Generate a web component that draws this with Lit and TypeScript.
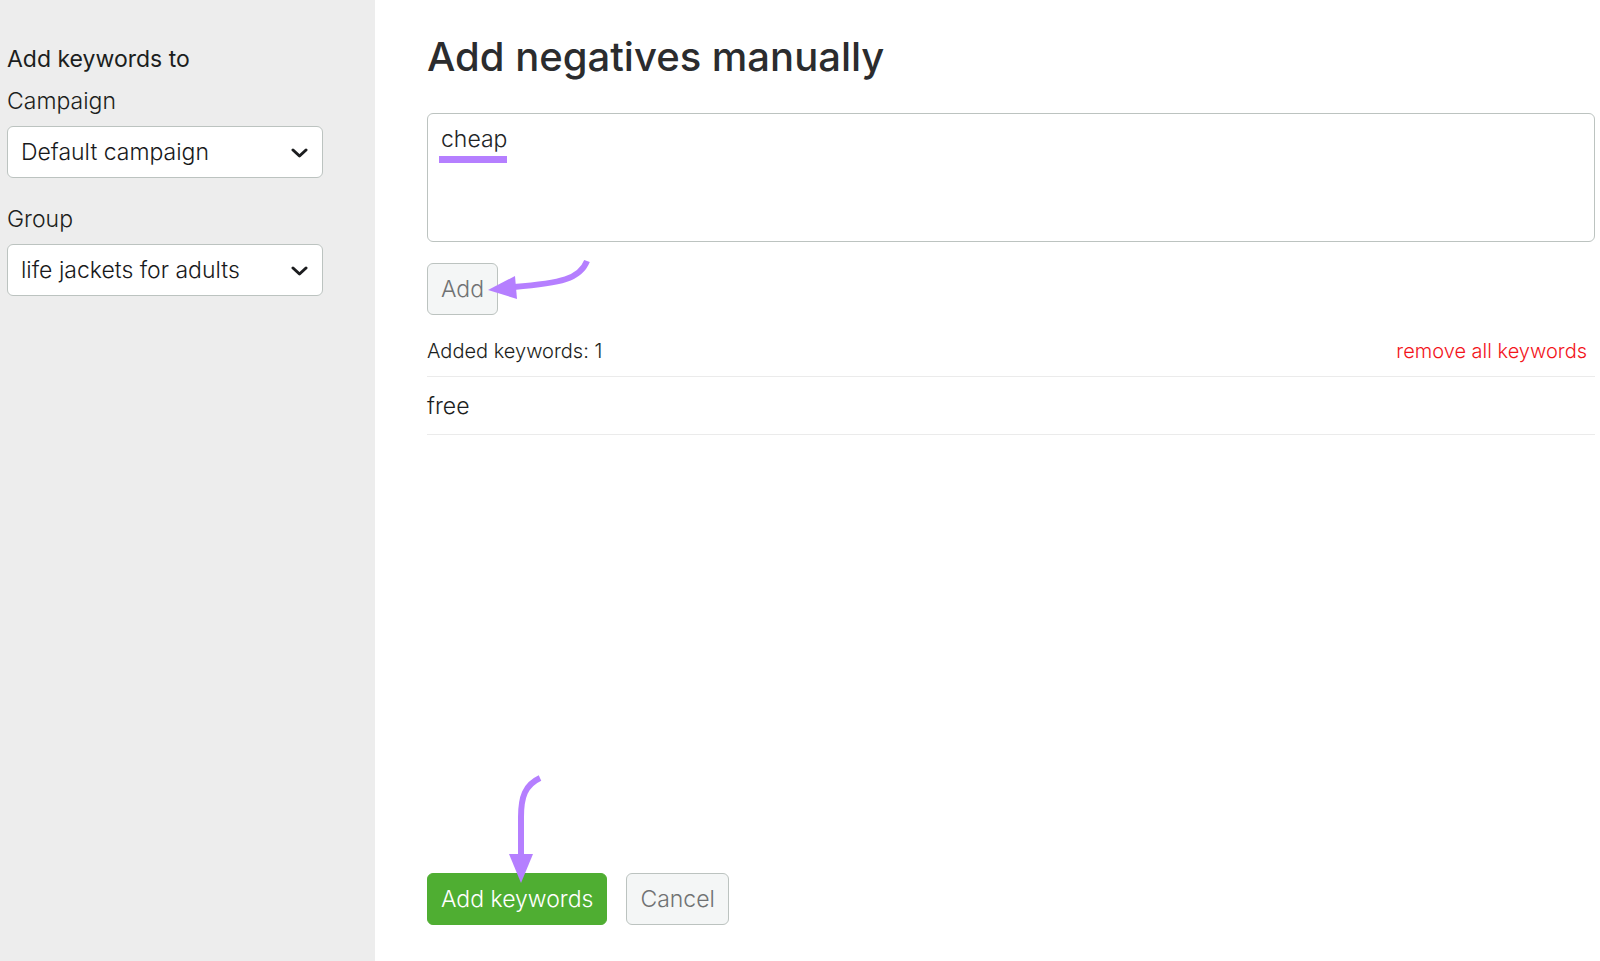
import { LitElement, html, css, svg } from "lit";
import { customElement, property, state } from "lit/decorators.js";

const controlText = css`
  * {
    box-sizing: border-box;
  }
  select,
  textarea,
  button {
    font-family: inherit;
    font-size: 23px;
    font-weight: 300;
    line-height: 30px;
    margin: 0;
  }
`;

@customElement("select-field")
export class SelectField extends LitElement {
  @property() label = "";
  @property({ type: Array }) options: string[] = [];

  static styles = [
    controlText,
    css`
      :host {
        display: block;
      }
      .label {
        display: block;
        margin-bottom: 10px;
      }
      .box {
        display: grid;
        align-items: center;
      }
      .select,
      .chevron {
        grid-area: 1 / 1;
      }
      .select {
        appearance: none;
        width: 100%;
        height: 52px;
        padding: 0 48px 0 13px;
        border: 1px solid #bcc3c0;
        border-radius: 6px;
        background: #fff;
        color: #18191b;
      }
      .chevron {
        justify-self: end;
        margin-right: 15px;
        pointer-events: none;
      }
    `,
  ];

  render() {
    return html`
      <label class="label" for="control">${this.label}</label>
      <div class="box">
        <select class="select" id="control">
          ${this.options.map((option) => html`<option>${option}</option>`)}
        </select>
        <svg class="chevron" width="18" height="12" viewBox="0 0 18 12" aria-hidden="true">
          <path d="M3 4l6.500 6 6.500-6" fill="none" stroke="#1c1d1f" stroke-width="3" stroke-linecap="round" stroke-linejoin="round" />
        </svg>
      </div>
    `;
  }
}

@customElement("app-root")
export class AppRoot extends LitElement {
  @state() private keywords = ["free"];

  static styles = [
    controlText,
    css`
      :host {
        display: grid;
        grid-template-columns: 375px minmax(0, 1fr);
        min-height: 100vh;
        font-family: Inter, "Liberation Sans", sans-serif;
        font-size: 23px;
        font-weight: 300;
        line-height: 30px;
        color: #1c1e20;
        background: #fff;
      }
      .sidebar {
        background: #ededed;
        padding: 44px 52px 36px 7px;
        display: flex;
        flex-direction: column;
      }
      .side-title {
        margin: 0 0 12px;
        font-size: 23px;
        font-weight: 400;
      }
      .group {
        margin-top: 26px;
      }
      .main {
        display: flex;
        flex-direction: column;
        padding: 33px 5px 36px 52px;
      }
      .title {
        margin: 0 0 32px;
        font-size: 40px;
        font-weight: 500;
        line-height: 48px;
        color: #2b2c2e;
      }
      .entry {
        position: relative;
        display: grid;
        margin-bottom: 21px;
      }
      .textarea {
        width: 100%;
        height: 129px;
        padding: 10px 13px;
        border: 1px solid #bcc3c0;
        border-radius: 6px;
        background: #fff;
        color: #222426;
        resize: none;
      }
      .underline {
        position: absolute;
        left: 12px;
        top: 43px;
        width: 68px;
        height: 7px;
        background: #b57fff;
      }
      .anchor {
        position: relative;
        display: flex;
      }
      .arrow {
        position: absolute;
        pointer-events: none;
        overflow: visible;
      }
      .arrow-add {
        left: 61px;
        top: -5px;
      }
      .arrow-submit {
        left: 70px;
        top: -100px;
      }
      .button {
        height: 52px;
        padding: 0 13px;
        border: 1px solid #bcc3c0;
        border-radius: 6px;
        background: #f4f6f6;
        color: #707273;
        white-space: nowrap;
      }
      .primary {
        border-color: #4fae32;
        background: #4fae32;
        color: #fff;
      }
      .summary {
        display: flex;
        justify-content: space-between;
        align-items: center;
        margin-top: 21px;
        padding: 0 8px 10px 0;
        border-bottom: 1px solid #ebebeb;
        font-size: 20px;
      }
      .remove {
        padding: 0;
        border: 0;
        background: none;
        color: #f3141b;
        font-size: 20px;
      }
      .list {
        list-style: none;
        margin: 0;
        padding: 0;
      }
      .item {
        padding: 14px 0 13px;
        border-bottom: 1px solid #ebebeb;
      }
      .footer {
        display: flex;
        gap: 19px;
        margin-top: auto;
      }
    `,
  ];

  private arrowToAdd = svg`
    <path d="M99 3C92 21 73 25 26 29" fill="none" stroke="#b57fff" stroke-width="6" />
    <path d="M0 32 27 18 29 41Z" fill="#b57fff" />
  `;

  private arrowToSubmit = svg`
    <path d="M43 5C28 12 24 24 24 44V84" fill="none" stroke="#b57fff" stroke-width="6" />
    <path d="M12 81H36L24 110Z" fill="#b57fff" />
  `;

  render() {
    return html`
      <aside class="sidebar">
        <h2 class="side-title">Add keywords to</h2>
        <select-field label="Campaign" .options=${["Default campaign"]}></select-field>
        <select-field class="group" label="Group" .options=${["life jackets for adults"]}></select-field>
      </aside>
      <main class="main">
        <h1 class="title">Add negatives manually</h1>
        <div class="entry">
          <textarea class="textarea" aria-label="Negative keywords" spellcheck="false" .value=${"cheap"}></textarea>
          <div class="underline"></div>
        </div>
        <div class="anchor">
          <button class="button" type="button">Add</button>
          <svg class="arrow arrow-add" width="104" height="44" viewBox="0 0 104 44" aria-hidden="true">${this.arrowToAdd}</svg>
        </div>
        <div class="summary">
          <span>Added keywords: ${this.keywords.length}</span>
          <button class="remove" type="button">remove all keywords</button>
        </div>
        <ul class="list">
          ${this.keywords.map((word) => html`<li class="item">${word}</li>`)}
        </ul>
        <div class="footer">
          <div class="anchor">
            <button class="button primary" type="button">Add keywords</button>
            <svg class="arrow arrow-submit" width="48" height="110" viewBox="0 0 48 110" aria-hidden="true">${this.arrowToSubmit}</svg>
          </div>
          <button class="button" type="button">Cancel</button>
        </div>
      </main>
    `;
  }
}
